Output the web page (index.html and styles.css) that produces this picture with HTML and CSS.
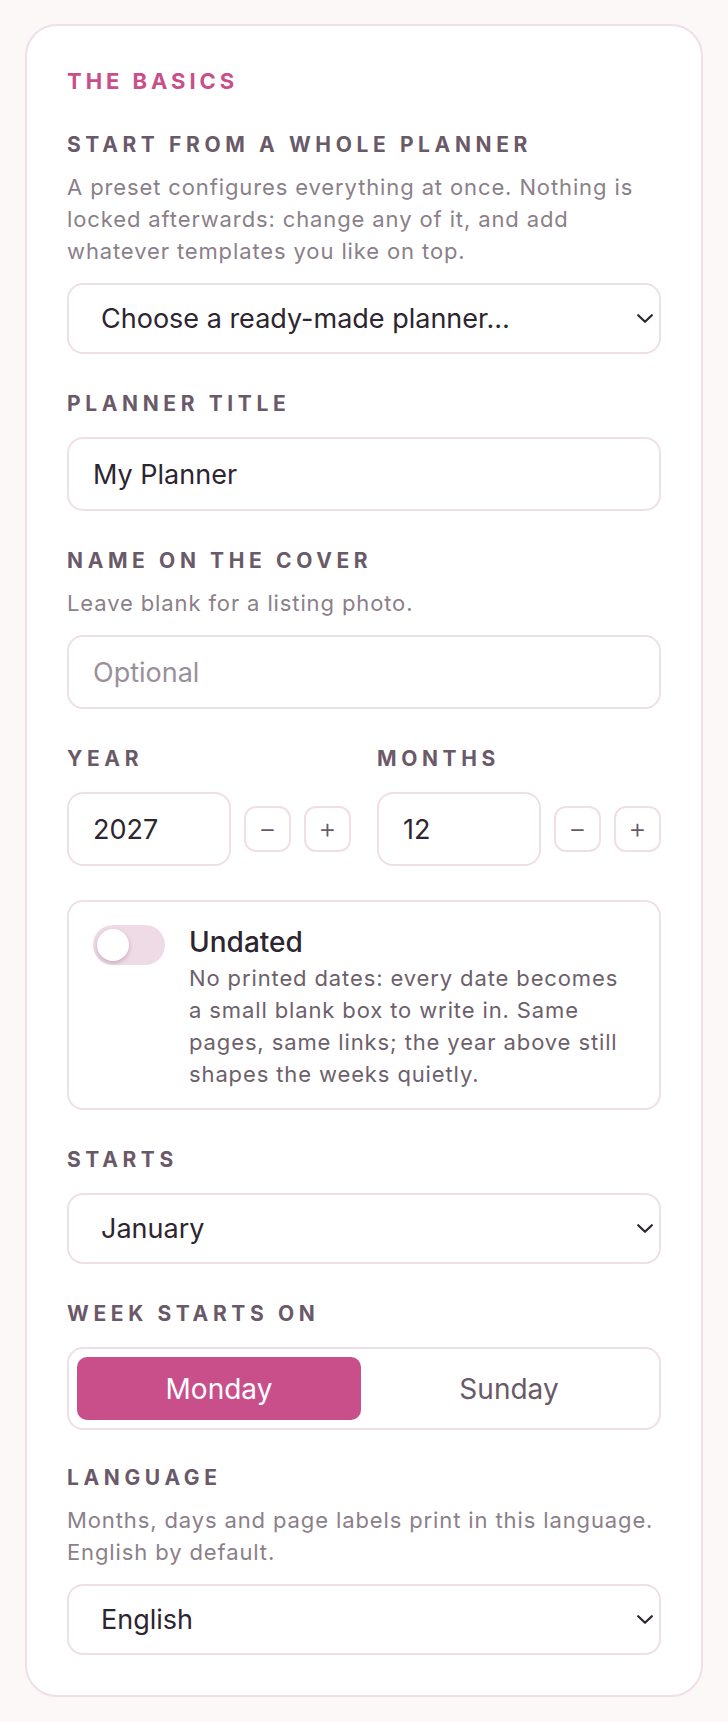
FILE: index.html
```html
<!DOCTYPE html>
<html lang="en">
<head>
<meta charset="utf-8">
<title>The basics</title>
<link rel="stylesheet" href="styles.css">
</head>
<body>
<div class="page">
  <section class="card">
    <h2 class="section-title">The basics</h2>

    <div class="field field-first">
      <label class="label has-hint" for="preset">Start from a whole planner</label>
      <p class="hint">A preset configures everything at once. Nothing is locked afterwards: change any of it, and add whatever templates you like on top.</p>
      <div class="select-wrap">
        <select id="preset" class="select">
          <option>Choose a ready-made planner…</option>
        </select>
        <svg class="chevron" width="16" height="9" viewBox="0 0 16 9" aria-hidden="true"><path d="M1.2 1.2 L8 7.8 L14.8 1.2" fill="none" stroke="#2d2530" stroke-width="2.2" stroke-linecap="round" stroke-linejoin="round"/></svg>
      </div>
    </div>

    <div class="field">
      <label class="label" for="title">Planner title</label>
      <input id="title" class="input" type="text" value="My Planner">
    </div>

    <div class="field">
      <label class="label has-hint" for="cover">Name on the cover</label>
      <p class="hint">Leave blank for a listing photo.</p>
      <input id="cover" class="input" type="text" placeholder="Optional">
    </div>

    <div class="field pair">
      <div class="col">
        <label class="label" for="year">Year</label>
        <div class="stepper">
          <input id="year" class="input num" type="text" value="2027">
          <button class="step" type="button">−</button>
          <button class="step" type="button">+</button>
        </div>
      </div>
      <div class="col">
        <label class="label" for="months">Months</label>
        <div class="stepper">
          <input id="months" class="input num" type="text" value="12">
          <button class="step" type="button">−</button>
          <button class="step" type="button">+</button>
        </div>
      </div>
    </div>

    <div class="toggle-card">
      <span class="toggle"><span class="knob"></span></span>
      <div class="toggle-text">
        <div class="toggle-title">Undated</div>
        <p class="toggle-desc">No printed dates: every date becomes a small blank box to write in. Same pages, same links; the year above still shapes the weeks quietly.</p>
      </div>
    </div>

    <div class="field">
      <label class="label" for="starts">Starts</label>
      <div class="select-wrap">
        <select id="starts" class="select">
          <option>January</option>
        </select>
        <svg class="chevron" width="16" height="9" viewBox="0 0 16 9" aria-hidden="true"><path d="M1.2 1.2 L8 7.8 L14.8 1.2" fill="none" stroke="#2d2530" stroke-width="2.2" stroke-linecap="round" stroke-linejoin="round"/></svg>
      </div>
    </div>

    <div class="field">
      <span class="label">Week starts on</span>
      <div class="seg">
        <button class="seg-btn active" type="button">Monday</button>
        <button class="seg-btn" type="button">Sunday</button>
      </div>
    </div>

    <div class="field field-last">
      <label class="label has-hint" for="lang">Language</label>
      <p class="hint">Months, days and page labels print in this language. English by default.</p>
      <div class="select-wrap">
        <select id="lang" class="select">
          <option>English</option>
        </select>
        <svg class="chevron" width="16" height="9" viewBox="0 0 16 9" aria-hidden="true"><path d="M1.2 1.2 L8 7.8 L14.8 1.2" fill="none" stroke="#2d2530" stroke-width="2.2" stroke-linecap="round" stroke-linejoin="round"/></svg>
      </div>
    </div>
  </section>
</div>
</body>
</html>
```

FILE: styles.css
```css
* { box-sizing: border-box; }

html, body { margin: 0; }

body {
  background: #fcf8f7;
  font-family: Inter, "Noto Sans", "Liberation Sans", sans-serif;
  color: #2d2530;
}

.page {
  padding: 24px 25px;
}

.card {
  background: #ffffff;
  border: 2px solid #f0dee8;
  border-radius: 32px;
  padding: 41px 40px 40px;
}

.section-title {
  margin: 0;
  font-size: 22px;
  line-height: 28px;
  font-weight: 700;
  letter-spacing: 0.18em;
  text-transform: uppercase;
  color: #c94f8b;
}

.field { margin-top: 36px; }
.field-last { margin-top: 34px; }

.label {
  display: block;
  font-size: 21px;
  line-height: 28px;
  font-weight: 700;
  letter-spacing: 0.22em;
  text-transform: uppercase;
  color: #6a5968;
  margin-bottom: 19px;
}

.label.has-hint { margin-bottom: 12px; }

.hint {
  margin: 0 0 16px;
  font-size: 22px;
  line-height: 32px;
  letter-spacing: 0.04em;
  color: #8b7f8a;
}

.input,
.select {
  display: block;
  width: 100%;
  font-family: inherit;
  font-size: 27px;
  color: #2d2530;
  background: #ffffff;
  border: 2px solid #f0dee8;
  border-radius: 16px;
  outline: none;
  margin: 0;
}

.input {
  height: 74px;
  padding: 0 24px;
}

.input::placeholder { color: #9b8f9a; }

.select-wrap { position: relative; }

.select {
  height: 71px;
  padding: 0 48px 0 32px;
  appearance: none;
  -webkit-appearance: none;
}

.chevron {
  position: absolute;
  right: 8px;
  top: 31px;
  pointer-events: none;
}

.pair {
  display: grid;
  grid-template-columns: 1fr 1fr;
  column-gap: 26px;
}

.stepper {
  display: flex;
  align-items: center;
  gap: 13px;
}

.input.num {
  flex: 1;
  min-width: 0;
}

.step {
  flex: none;
  width: 47px;
  height: 46px;
  padding: 0 0 2px;
  border: 2px solid #f0dee8;
  border-radius: 12px;
  background: #ffffff;
  font-family: inherit;
  font-size: 28px;
  font-weight: 300;
  line-height: 1;
  color: #6a5968;
}

.toggle-card {
  margin-top: 34px;
  display: flex;
  align-items: flex-start;
  gap: 24px;
  border: 2px solid #f0dee8;
  border-radius: 16px;
  padding: 23px 24px 18px;
}

.toggle {
  flex: none;
  display: flex;
  align-items: center;
  width: 72px;
  height: 40px;
  padding: 4px;
  border-radius: 20px;
  background: #eedbe6;
}

.knob {
  width: 32px;
  height: 32px;
  border-radius: 50%;
  background: #ffffff;
  box-shadow: 0 2px 4px rgba(90, 50, 75, 0.28);
}

.toggle-text { flex: 1; min-width: 0; }

.toggle-title {
  font-size: 28px;
  line-height: 34px;
  font-weight: 500;
  color: #2d2530;
}

.toggle-desc {
  margin: 3px 0 0;
  font-size: 22px;
  line-height: 32px;
  letter-spacing: 0.04em;
  color: #6e5f6c;
}

.seg {
  display: flex;
  gap: 6px;
  height: 83px;
  padding: 8px;
  border: 2px solid #f0dee8;
  border-radius: 16px;
}

.seg-btn {
  flex: 1;
  border: none;
  border-radius: 10px;
  background: transparent;
  font-family: inherit;
  font-size: 28px;
  color: #6a5968;
  padding: 0;
}

.seg-btn.active {
  background: #c94f8b;
  color: #ffffff;
}
```
